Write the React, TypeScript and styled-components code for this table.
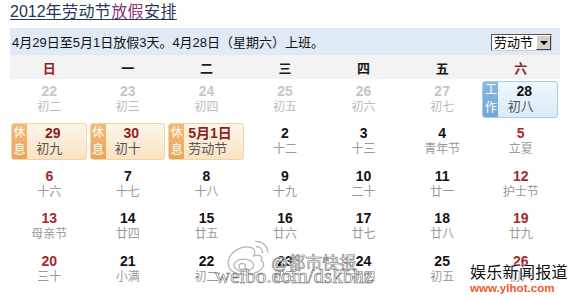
import React from 'react';
import styled, { createGlobalStyle, css } from 'styled-components';

type Tone = 'prev' | 'normal' | 'red' | 'holiday';

interface DayData {
  num: string;
  lunar: string;
  tone: Tone;
  box?: 'rest' | 'work';
  left?: boolean;
}

const RED = '#a22a2a';
const DEEP_RED = '#8e1f1f';

const GlobalStyle = createGlobalStyle`
  body { margin: 0; background: #fff; font-family: "Liberation Sans", "Noto Sans CJK SC", sans-serif; }
`;

const Page = styled.div`
  position: relative; width: 577px; height: 299px; overflow: hidden;
  padding-left: 10px; box-sizing: border-box;
`;

const Title = styled.div`
  height: 28px; padding-top: 1px; box-sizing: border-box;
  font-size: 16px; line-height: 22px; color: #24395a;
  font-family: "Liberation Sans", "Noto Sans CJK SC", sans-serif;
`;

const TitleText = styled.span`
  display: inline-block; text-decoration: underline; text-underline-offset: 2px;
`;

const Cjk = styled.span<{ $pink?: boolean }>`
  letter-spacing: 0.4px;
  ${p => p.$pink && css`color: #8c3470;`}
`;

const InfoBar = styled.div`
  width: 550px; height: 27px; display: flex; align-items: center; justify-content: space-between;
  background: #e0eaf6; padding: 0 8px 0 2px; box-sizing: border-box;
  font-size: 13px; color: #111;
`;

const FakeSelect = styled.div`
  display: flex; height: 17px; width: 61px; box-sizing: border-box; margin-top: 2px;
  border: 1px solid #555; border-right-color: #ccc; border-bottom-color: #ccc; background: #fff;
`;

const SelectValue = styled.span`
  flex: 1; font-size: 13px; line-height: 15px; padding-left: 2px; color: #000;
`;

const SelectArrow = styled.span`
  width: 15px; background: #d4d0c8; border: 1px solid; border-color: #fff #404040 #404040 #fff;
  box-sizing: border-box; display: flex; align-items: center; justify-content: center;
  &::after { content: ''; border: 4px solid transparent; border-top: 4px solid #000; border-bottom: 0; margin-top: 1px; }
`;

const WeekHeader = styled.div`
  width: 550px; height: 24px; display: grid; grid-template-columns: repeat(7, 1fr);
  background: #f3f3f3; align-items: center;
`;

const WeekDay = styled.span<{ $weekend?: boolean }>`
  text-align: center; font-weight: bold; font-size: 13px; color: ${p => (p.$weekend ? DEEP_RED : '#1a1a1a')};
`;

const Grid = styled.div`
  width: 550px; display: grid; grid-template-columns: repeat(7, 1fr); grid-auto-rows: 42.4px;
`;

const Cell = styled.div`
  padding-top: 4px; box-sizing: border-box; text-align: center;
`;

const toneColor = (t: Tone) =>
  t === 'prev' ? '#c6c6c6' : t === 'red' ? RED : t === 'holiday' ? DEEP_RED : '#111';

const Num = styled.div<{ $tone: Tone }>`
  font-weight: bold; font-size: 14px; line-height: 16px; color: ${p => toneColor(p.$tone)};
`;

const Lunar = styled.div<{ $tone: Tone }>`
  font-size: 12px; line-height: 16px; color: ${p => (p.$tone === 'prev' ? '#bcbcbc' : '#999')};
`;

const Box = styled.div<{ $kind: 'rest' | 'work' }>`
  display: flex; height: 37px; margin: 2px 2px 0 1px; box-sizing: border-box; border-radius: 3px; overflow: hidden;
  ${p => p.$kind === 'rest'
    ? css`border: 1px solid #f1d3a6; background: linear-gradient(#fef6ea, #fae2c2);`
    : css`border: 1px solid #a9cde8; background: linear-gradient(#eef7fd, #d9ecf9);`}
`;

const Tag = styled.div<{ $kind: 'rest' | 'work' }>`
  width: 15px; display: flex; flex-direction: column; justify-content: space-around; align-items: center;
  color: #fff; font-size: 12px; line-height: 15px;
  background: ${p => (p.$kind === 'rest' ? 'linear-gradient(#f3b977, #eba55a)' : 'linear-gradient(#86b9e0, #6fa7d4)')};
`;

const BoxBody = styled.div<{ $left?: boolean }>`
  flex: 1; padding-top: 1px; text-align: center; padding-right: 14px;
  ${p => p.$left && css`text-align: left; padding: 1px 0 0 4px;`}
  ${Num} { padding-left: ${p => (p.$left ? 0 : 7)}px; }
  ${Lunar} { font-size: 13px; line-height: 16px; color: #555; }
`;

const Mark = styled.div`
  position: absolute; white-space: nowrap; pointer-events: none;
`;

const WeiboName = styled(Mark)`
  left: 271px; top: 249px; font-size: 17px; color: #fff; -webkit-text-stroke: 0.6px #707070;
`;

const WeiboUrl = styled(Mark)`
  left: 215px; top: 264px; font-size: 21px; font-family: "Liberation Serif", serif;
  color: #fff; -webkit-text-stroke: 0.6px #6a6a6a;
`;

const SiteName = styled(Mark)`
  left: 470px; top: 259px; font-size: 16px; color: #111; letter-spacing: 0.3px;
  text-shadow: 0 0 2px #fff, 0 0 2px #fff;
`;

const SiteUrl = styled(Mark)`
  left: 470px; top: 281px; font-size: 11.6px; font-weight: bold; color: #ef5a2a;
  text-shadow: 0 0 2px #fff;
`;

const LogoWrap = styled(Mark)`
  left: 225px; top: 237px;
`;

const WeiboLogo = () => (
  <svg width="46" height="40" viewBox="0 0 44 38" fill="none" stroke="#b4b4b4" strokeWidth="1.2">
    <path d="M3 25 C3 15 16 7 25 10 C29 11 29 15 27.5 18 C32 16 37 18 34.5 22.5 C39 24 38 33 24 35.5 C12 37.5 3 33 3 25 Z" fill="rgba(255,255,255,0.6)" />
    <ellipse cx="18" cy="27" rx="9.5" ry="6" />
    <circle cx="16.5" cy="28" r="3" />
    <path d="M29 4 A11 11 0 0 1 41 15" />
    <path d="M29.5 9 A6 6 0 0 1 36 15.5" />
  </svg>
);

const d = (num: string, lunar: string, tone: Tone = 'normal', extra: Partial<DayData> = {}): DayData => ({ num, lunar, tone, ...extra });

const WEEK = ['日', '一', '二', '三', '四', '五', '六'];

const DAYS: DayData[] = [
  d('22', '初二', 'prev'), d('23', '初三', 'prev'), d('24', '初四', 'prev'), d('25', '初五', 'prev'),
  d('26', '初六', 'prev'), d('27', '初七', 'prev'), d('28', '初八', 'normal', { box: 'work' }),
  d('29', '初九', 'holiday', { box: 'rest' }), d('30', '初十', 'holiday', { box: 'rest' }),
  d('5月1日', '劳动节', 'holiday', { box: 'rest', left: true }),
  d('2', '十二'), d('3', '十三'), d('4', '青年节'), d('5', '立夏', 'red'),
  d('6', '十六', 'red'), d('7', '十七'), d('8', '十八'), d('9', '十九'), d('10', '二十'), d('11', '廿一'), d('12', '护士节', 'red'),
  d('13', '母亲节', 'red'), d('14', '廿四'), d('15', '廿五'), d('16', '廿六'), d('17', '廿七'), d('18', '廿八'), d('19', '廿九', 'red'),
  d('20', '三十', 'red'), d('21', '小满'), d('22', '初二'), d('23', '初三'), d('24', '初四'), d('25', '初五'), d('26', '初六', 'red'),
];

const DayCell = ({ day }: { day: DayData }) => {
  if (day.box) {
    const tag = day.box === 'rest' ? ['休', '息'] : ['工', '作'];
    return (
      <Box $kind={day.box}>
        <Tag $kind={day.box}>{tag.map(c => <span key={c}>{c}</span>)}</Tag>
        <BoxBody $left={day.left}>
          <Num $tone={day.tone}>{day.num}</Num>
          <Lunar $tone={day.tone}>{day.lunar}</Lunar>
        </BoxBody>
      </Box>
    );
  }
  return (
    <Cell>
      <Num $tone={day.tone}>{day.num}</Num>
      <Lunar $tone={day.tone}>{day.lunar}</Lunar>
    </Cell>
  );
};

export default function App() {
  return (
    <Page>
      <GlobalStyle />
      <Title>
        <TitleText>2012<Cjk>年劳动节</Cjk><Cjk $pink>放假</Cjk><Cjk>安排</Cjk></TitleText>
      </Title>
      <InfoBar>
        <span>4月29日至5月1日放假3天。4月28日（星期六）上班。</span>
        <FakeSelect>
          <SelectValue>劳动节</SelectValue>
          <SelectArrow />
        </FakeSelect>
      </InfoBar>
      <WeekHeader>
        {WEEK.map((w, i) => <WeekDay key={w} $weekend={i === 0 || i === 6}>{w}</WeekDay>)}
      </WeekHeader>
      <Grid>
        {DAYS.map((day, i) => <DayCell key={i} day={day} />)}
      </Grid>
      <LogoWrap><WeiboLogo /></LogoWrap>
      <WeiboName>@都市快报</WeiboName>
      <WeiboUrl>weibo.com/dskbhz</WeiboUrl>
      <SiteName>娱乐新闻报道</SiteName>
      <SiteUrl>www.ylhot.com</SiteUrl>
    </Page>
  );
}
